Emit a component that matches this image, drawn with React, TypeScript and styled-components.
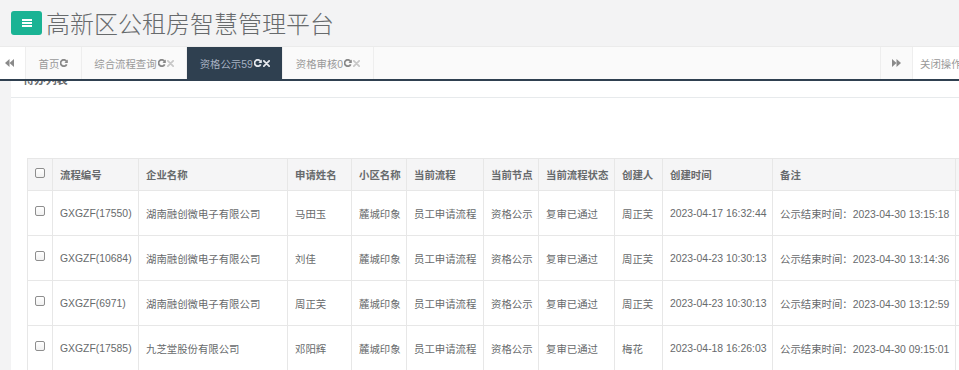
import React from "react";
import styled, { createGlobalStyle } from "styled-components";

const GlobalStyle = createGlobalStyle`
  html, body { margin: 0; padding: 0; overflow: hidden; background: #f3f3f4; }
  body { font-family: "Liberation Sans", Arial, "Noto Sans CJK SC", sans-serif; color: #676a6c; }
  * { box-sizing: border-box; }
`;

const Page = styled.div`
  width: 977px;
  height: 370px;
  overflow: hidden;
  background: #f3f3f4;
`;

const TopBar = styled.header`
  height: 46px;
  display: flex;
  align-items: center;
  padding-left: 11px;
  background: #f3f3f4;
`;

const MenuButton = styled.button`
  width: 31px;
  height: 24px;
  border: none;
  border-radius: 3px;
  background: #1ab394;
  display: flex;
  align-items: center;
  justify-content: center;
  padding: 0;
`;

const Title = styled.h1`
  margin: 0 0 0 4px;
  font-family: "Noto Sans CJK SC", "Liberation Sans", sans-serif;
  font-weight: 300;
  font-size: 24px;
  line-height: 30px;
  color: #676a6c;
`;

const TabBar = styled.nav`
  position: relative;
  z-index: 2;
  height: 35px;
  display: flex;
  background: #fafafa;
  border-top: 1px solid #ebebeb;
  border-bottom: 2px solid #2f4050;
  font-family: "Liberation Sans", "Noto Sans CJK SC", sans-serif;
  font-size: 10.4px;
`;

const NavButton = styled.div<{ $side: "left" | "right" }>`
  flex: 0 0 ${(p) => (p.$side === "left" ? "26px" : "33px")};
  display: flex;
  align-items: center;
  justify-content: center;
  padding-right: ${(p) => (p.$side === "left" ? "6px" : "0")};
  background: ${(p) => (p.$side === "left" ? "#fff" : "#fafafa")};
  border-right: 1px solid #eee;
  border-left: ${(p) => (p.$side === "right" ? "1px solid #eee" : "none")};
`;

const Tabs = styled.div`
  flex: 1;
  display: flex;
  overflow: hidden;
`;

const Tab = styled.div<{ $active?: boolean }>`
  display: flex;
  align-items: center;
  padding: 0 12.5px 0 12.5px;
  white-space: nowrap;
  border-right: 1px solid #eee;
  background: ${(p) => (p.$active ? "#2f4050" : "transparent")};
  color: ${(p) => (p.$active ? "#a7b1c2" : "#999")};
`;

const TabIcons = styled.span<{ $active?: boolean }>`
  display: inline-flex;
  align-items: center;
  gap: 1px;
  margin-left: 1px;
  color: ${(p) => (p.$active ? "#e6e9ee" : "#888")};
`;

const CloseMark = styled.span<{ $active?: boolean }>`
  display: inline-flex;
  color: ${(p) => (p.$active ? "#e6e9ee" : "#c8c8c8")};
`;

const CloseOps = styled.div`
  flex: 0 0 64px;
  display: flex;
  align-items: center;
  padding-left: 7px;
  color: #999;
  white-space: nowrap;
  background: #fff;
`;

const Content = styled.main`
  margin-top: -21px;
  padding-left: 11px;
  background: #f3f3f4;
`;

const Panel = styled.section`
  background: #fff;
`;

const PanelTitle = styled.h5`
  margin: 0;
  padding: 12px 12px 9px 12px;
  line-height: 16px;
  font-size: 11.2px;
  font-weight: bold;
  color: #676a6c;
  font-family: "Liberation Sans", "Noto Sans CJK SC", sans-serif;
  border-bottom: 1px solid #e7eaec;
`;

const PanelBody = styled.div`
  padding: 60px 0 0 16px;
  overflow: hidden;
`;

const Table = styled.table`
  border-collapse: collapse;
  table-layout: fixed;
  width: 1000px;
  font-size: 10.4px;
  font-family: "Liberation Sans", "Noto Sans CJK SC", sans-serif;
  color: #676a6c;
  border: 1px solid #e7e7e7;
`;

const Th = styled.th`
  height: 32px;
  padding: 0 7px;
  text-align: left;
  font-weight: bold;
  background: #f5f5f6;
  border: 1px solid #e7e7e7;
  white-space: nowrap;
  overflow: hidden;
`;

const Td = styled.td`
  height: 45px;
  padding: 0 7px;
  border: 1px solid #e7e7e7;
  white-space: nowrap;
  overflow: hidden;
`;

const Check = styled.input.attrs({ type: "checkbox" })`
  appearance: none;
  display: block;
  width: 10px;
  height: 10px;
  margin: -4px auto 0;
  border: 1px solid #8e8e8e;
  border-radius: 2px;
  background: linear-gradient(#fff, #f1f1f1);
`;

const BarsIcon = () => (
  <svg width="10" height="8" viewBox="0 0 10 8">
    <rect x="0" y="0" width="10" height="2" fill="#fff" />
    <rect x="0" y="3" width="10" height="2" fill="#fff" />
    <rect x="0" y="6" width="10" height="2" fill="#fff" />
  </svg>
);

const DoubleArrow = ({ dir }: { dir: "left" | "right" }) => (
  <svg width="9" height="8" viewBox="0 0 9 8" style={{ transform: dir === "right" ? "scaleX(-1)" : undefined }}>
    <polygon points="4.5,0 0,4 4.5,8" fill="#8a8a8a" />
    <polygon points="9,0 4.5,4 9,8" fill="#8a8a8a" />
  </svg>
);

const RefreshIcon = () => (
  <svg width="8" height="8" viewBox="0 0 10 10">
    <path d="M8.3 3.2 A4 4 0 1 0 8.4 6.6" fill="none" stroke="currentColor" strokeWidth="2.2" />
    <polygon points="9.8,0.6 9.8,5 5.6,5" fill="currentColor" />
  </svg>
);

const TimesIcon = () => (
  <svg width="7" height="7" viewBox="0 0 8 8">
    <path d="M1 1 L7 7 M7 1 L1 7" stroke="currentColor" strokeWidth="2" strokeLinecap="round" />
  </svg>
);

const tabs = [
  { label: "首页", close: false, active: false },
  { label: "综合流程查询", close: true, active: false },
  { label: "资格公示59", close: true, active: true },
  { label: "资格审核0", close: true, active: false },
];

const columns = [
  { label: "", w: 25 },
  { label: "流程编号", w: 86 },
  { label: "企业名称", w: 149 },
  { label: "申请姓名", w: 64 },
  { label: "小区名称", w: 55 },
  { label: "当前流程", w: 77 },
  { label: "当前节点", w: 55 },
  { label: "当前流程状态", w: 76 },
  { label: "创建人", w: 48 },
  { label: "创建时间", w: 110 },
  { label: "备注", w: 183 },
  { label: "操作", w: 72 },
];

const rows = [
  ["GXGZF(17550)", "湖南融创微电子有限公司", "马田玉", "麓城印象", "员工申请流程", "资格公示", "复审已通过", "周正芙", "2023-04-17 16:32:44", "公示结束时间：2023-04-30 13:15:18"],
  ["GXGZF(10684)", "湖南融创微电子有限公司", "刘佳", "麓城印象", "员工申请流程", "资格公示", "复审已通过", "周正芙", "2023-04-23 10:30:13", "公示结束时间：2023-04-30 13:14:36"],
  ["GXGZF(6971)", "湖南融创微电子有限公司", "周正芙", "麓城印象", "员工申请流程", "资格公示", "复审已通过", "周正芙", "2023-04-23 10:30:13", "公示结束时间：2023-04-30 13:12:59"],
  ["GXGZF(17585)", "九芝堂股份有限公司", "邓阳辉", "麓城印象", "员工申请流程", "资格公示", "复审已通过", "梅花", "2023-04-18 16:26:03", "公示结束时间：2023-04-30 09:15:01"],
];

export default function App() {
  return (
    <Page>
      <GlobalStyle />
      <TopBar>
        <MenuButton aria-label="menu">
          <BarsIcon />
        </MenuButton>
        <Title>高新区公租房智慧管理平台</Title>
      </TopBar>
      <TabBar>
        <NavButton $side="left">
          <DoubleArrow dir="left" />
        </NavButton>
        <Tabs>
          {tabs.map((t) => (
            <Tab key={t.label} $active={t.active}>
              {t.label}
              <TabIcons $active={t.active}>
                <RefreshIcon />
                {t.close && (
                  <CloseMark $active={t.active}>
                    <TimesIcon />
                  </CloseMark>
                )}
              </TabIcons>
            </Tab>
          ))}
        </Tabs>
        <NavButton $side="right">
          <DoubleArrow dir="right" />
        </NavButton>
        <CloseOps>关闭操作▾</CloseOps>
      </TabBar>
      <Content>
        <Panel>
          <PanelTitle>待办列表</PanelTitle>
          <PanelBody>
            <Table>
              <colgroup>
                {columns.map((c, i) => (
                  <col key={i} style={{ width: c.w }} />
                ))}
              </colgroup>
              <thead>
                <tr>
                  {columns.map((c, i) => (
                    <Th key={i}>{i === 0 ? <Check /> : c.label}</Th>
                  ))}
                </tr>
              </thead>
              <tbody>
                {rows.map((r, ri) => (
                  <tr key={ri}>
                    <Td>
                      <Check />
                    </Td>
                    {r.map((v, ci) => (
                      <Td key={ci}>{v}</Td>
                    ))}
                    <Td />
                  </tr>
                ))}
              </tbody>
            </Table>
          </PanelBody>
        </Panel>
      </Content>
    </Page>
  );
}
